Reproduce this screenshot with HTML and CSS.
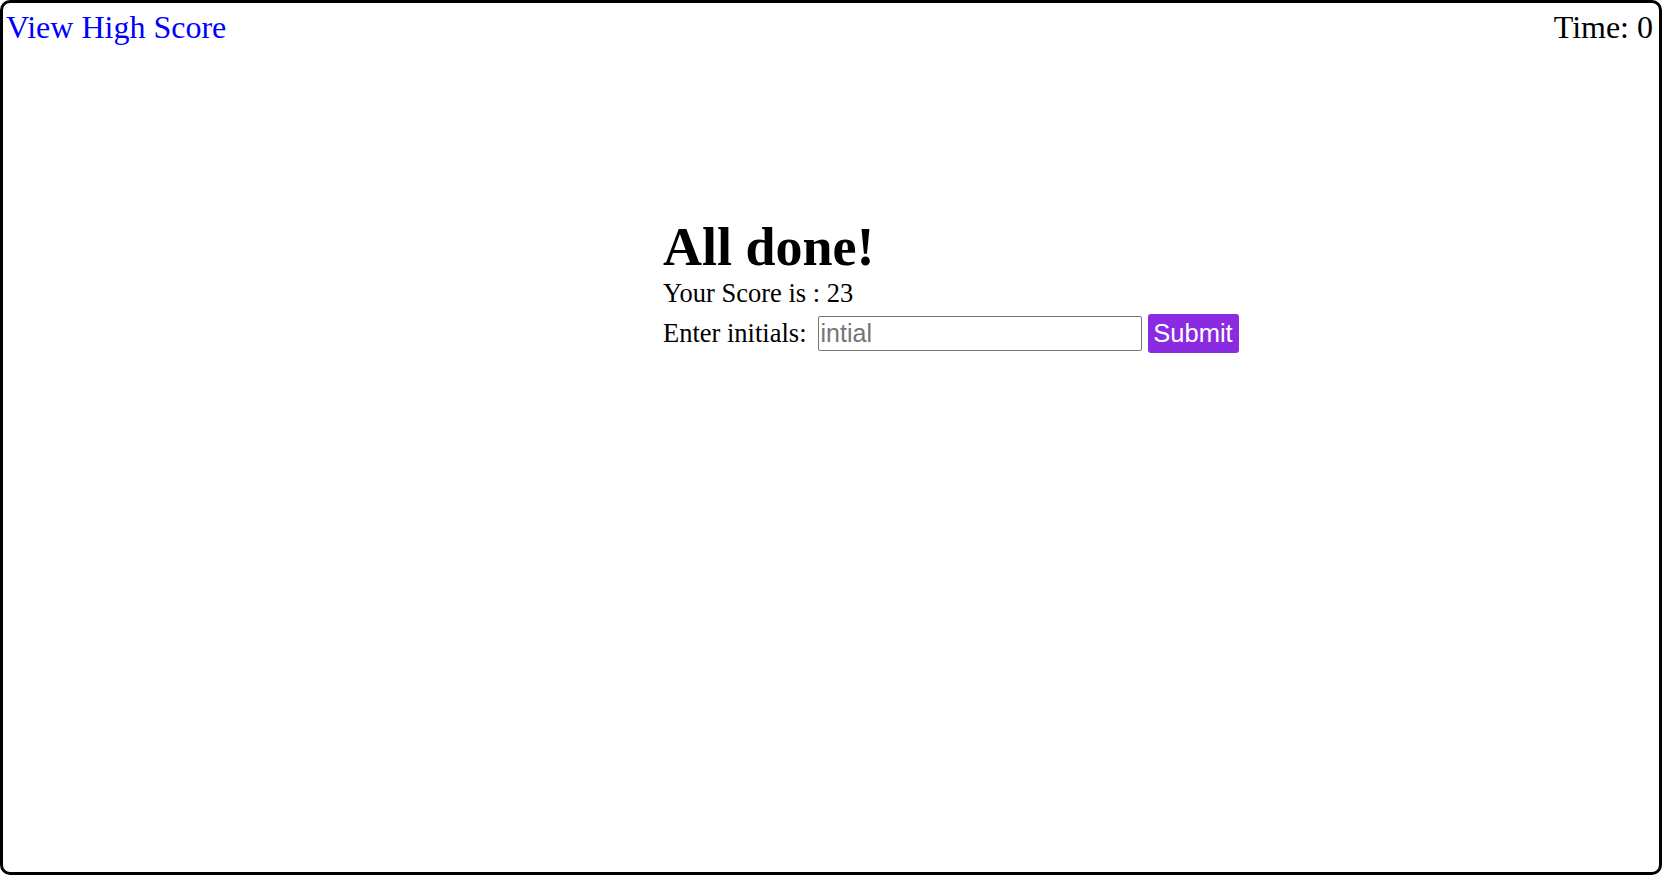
FILE: index.html
```html
<!DOCTYPE html>
<html lang="en">
<head>
<meta charset="utf-8">
<title>Quiz</title>
<link rel="stylesheet" href="styles.css">
</head>
<body>
<div class="frame">
  <header class="topbar">
    <a class="high" href="#">View High Score</a>
    <span class="time">Time: 0</span>
  </header>
  <main class="done">
    <h1 class="title">All done!</h1>
    <p class="score">Your Score is : 23</p>
    <form class="initials">
      <label class="label" for="ini">Enter initials:</label>
      <input class="field" id="ini" type="text" placeholder="intial">
      <button class="submit" type="button">Submit</button>
    </form>
  </main>
</div>
</body>
</html>
```
FILE: styles.css
```css
html, body {
  margin: 0;
  padding: 0;
  background: #fff;
}
body {
  font-family: "Liberation Serif", "Times New Roman", serif;
  color: #000;
}
.frame {
  box-sizing: border-box;
  width: 1662px;
  height: 875px;
  border: 3px solid #000;
  border-radius: 10px;
  display: flex;
  flex-direction: column;
}
.topbar {
  display: flex;
  justify-content: space-between;
  align-items: baseline;
  padding: 6px 6px 0 3px;
  font-size: 32px;
  line-height: 36px;
}
.high {
  color: #0000ff;
  text-decoration: none;
}
.time {
  color: #000;
}
.done {
  display: flex;
  flex-direction: column;
  align-items: flex-start;
  padding: 171px 0 0 660px;
}
.title {
  margin: 0;
  font-size: 54px;
  line-height: 62px;
  font-weight: bold;
}
.score {
  margin: 0;
  font-size: 26.5px;
  line-height: 30px;
}
.initials {
  margin: 6px 0 0;
  display: flex;
  align-items: center;
}
.label {
  font-size: 26.5px;
  line-height: 30px;
  padding-bottom: 2px;
  margin-right: 11px;
}
.field {
  box-sizing: border-box;
  width: 324px;
  height: 35px;
  margin: 0;
  border: 1px solid #767676;
  border-radius: 2px;
  padding: 0 2px;
  font-family: "Liberation Sans", Arial, sans-serif;
  font-size: 25px;
  color: #000;
  background: #fff;
}
.field::placeholder {
  color: #757575;
}
.submit {
  box-sizing: border-box;
  margin: 0 0 0 6px;
  width: 91px;
  height: 39px;
  padding: 0;
  border: none;
  border-radius: 3px;
  background: #8a2be2;
  color: #fff;
  font-family: "Liberation Sans", Arial, sans-serif;
  font-size: 25.5px;
}
```
